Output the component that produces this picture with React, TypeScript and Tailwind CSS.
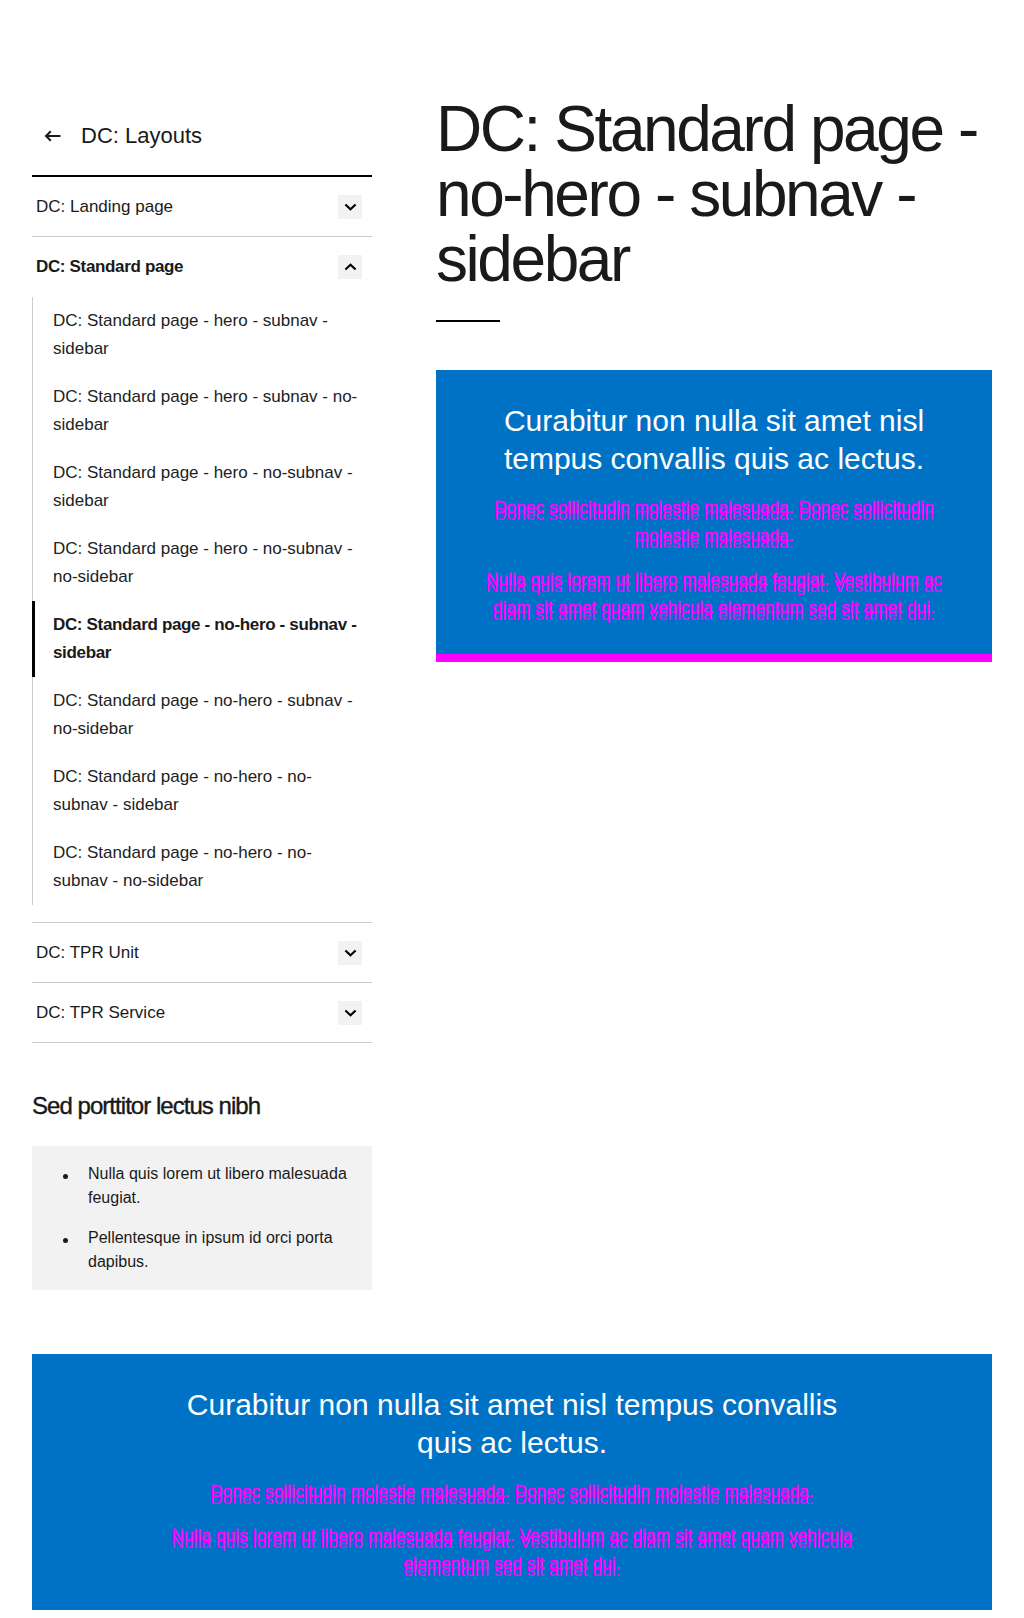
import type { ReactNode } from "react";

type NavGroup = {
  label: string;
  open?: boolean;
  children?: { label: string; active?: boolean }[];
};

const NAV: NavGroup[] = [
  { label: "DC: Landing page" },
  {
    label: "DC: Standard page",
    open: true,
    children: [
      { label: "DC: Standard page - hero - subnav - sidebar" },
      { label: "DC: Standard page - hero - subnav - no-sidebar" },
      { label: "DC: Standard page - hero - no-subnav - sidebar" },
      { label: "DC: Standard page - hero - no-subnav - no-sidebar" },
      { label: "DC: Standard page - no-hero - subnav - sidebar", active: true },
      { label: "DC: Standard page - no-hero - subnav - no-sidebar" },
      { label: "DC: Standard page - no-hero - no-subnav - sidebar" },
      { label: "DC: Standard page - no-hero - no-subnav - no-sidebar" },
    ],
  },
  { label: "DC: TPR Unit" },
  { label: "DC: TPR Service" },
];

function Chevron({ up }: { up?: boolean }) {
  return (
    <span className="flex h-6 w-6 shrink-0 items-center justify-center bg-[#f2f2f2]">
      <svg width="13" height="8" viewBox="0 0 14 8" fill="none" aria-hidden>
        <path
          d={up ? "M1.5 6.8 L7 1.5 L12.5 6.8" : "M1.5 1.2 L7 6.5 L12.5 1.2"}
          stroke="#000"
          strokeWidth="2.3"
        />
      </svg>
    </span>
  );
}

function BackArrow() {
  return (
    <svg width="17" height="12" viewBox="0 0 17 12" fill="none" aria-hidden>
      <path d="M16.5 6H2 M6.8 1.2 L2 6 L6.8 10.8" stroke="#1a1a1a" strokeWidth="2" />
    </svg>
  );
}

// Callout bleu : titre blanc + paragraphes magenta doublés (rendu cassé d'origine)
function Callout({
  paragraphs,
  wide,
  className = "",
}: {
  paragraphs: ReactNode[];
  wide?: boolean;
  className?: string;
}) {
  return (
    <section
      className={`bg-[#0072c6] pt-8 pb-7 text-center ${
        wide ? "px-8" : "border-b-8 border-[#ff00ff] px-10"
      } ${className}`}
    >
      <div className={wide ? "mx-auto max-w-[696px]" : ""}>
        <h3 className="mb-5 text-[30px] leading-[38px] text-white">
          Curabitur non nulla sit amet nisl tempus convallis quis ac lectus.
        </h3>
        <div className="space-y-4">
          {paragraphs.map((p, i) => (
            <p
              key={i}
              className="relative -top-1 text-[17px] leading-7 tracking-[0.01em] text-[#ff00ff] [-webkit-text-stroke:0.5px_#ff00ff] [text-shadow:0_7px_0_#ff00ff]"
            >
              {p}
            </p>
          ))}
        </div>
      </div>
    </section>
  );
}

const CALLOUT_TEXT = [
  "Donec sollicitudin molestie malesuada. Donec sollicitudin molestie malesuada.",
  "Nulla quis lorem ut libero malesuada feugiat. Vestibulum ac diam sit amet quam vehicula elementum sed sit amet dui.",
];

export default function App() {
  return (
    <div className="min-h-screen bg-white font-['Liberation_Sans',Arial,sans-serif] text-[#1a1a1a]">
      <div className="px-8 pt-24">
        <div className="flex items-start gap-16">
          <aside className="w-[340px] shrink-0">
            <div className="flex h-[81px] items-center gap-5 border-b-2 border-black pl-3">
              <BackArrow />
              <span className="text-[22px] leading-7">DC: Layouts</span>
            </div>

            <nav>
              {NAV.map((group) =>
                group.open ? (
                  <div key={group.label} className="border-b border-[#cccccc] pb-[17px]">
                    <div className="flex h-[60px] items-center justify-between pl-1 pr-[10px]">
                      <span className="text-[17px] font-bold tracking-[-0.02em]">
                        {group.label}
                      </span>
                      <Chevron up />
                    </div>
                    <ul>
                      {group.children!.map((child) => (
                        <li
                          key={child.label}
                          className={
                            child.active
                              ? "border-l-[3px] border-black py-[10px] pl-[18px] pr-3 text-[17px] leading-7 font-bold tracking-[-0.02em]"
                              : "border-l border-[#cccccc] py-[10px] pl-5 pr-3 text-[17px] leading-7 text-[#222222]"
                          }
                        >
                          {child.label}
                        </li>
                      ))}
                    </ul>
                  </div>
                ) : (
                  <div
                    key={group.label}
                    className="flex h-[60px] items-center justify-between border-b border-[#cccccc] pl-1 pr-[10px]"
                  >
                    <span className="text-[17px]">{group.label}</span>
                    <Chevron />
                  </div>
                )
              )}
            </nav>

            <h2 className="mt-[47px] mb-6 text-[24px] leading-8 tracking-[-0.04em] [-webkit-text-stroke:0.35px_#111]">
              Sed porttitor lectus nibh
            </h2>
            <ul className="space-y-4 bg-[#f2f2f2] py-4 pl-[31px] pr-4 text-[16px] leading-6">
              {["Nulla quis lorem ut libero malesuada feugiat.", "Pellentesque in ipsum id orci porta dapibus."].map(
                (t) => (
                  <li key={t} className="flex">
                    <span className="mt-3 mr-5 h-[5px] w-[5px] shrink-0 rounded-full bg-[#1a1a1a]" />
                    <span>{t}</span>
                  </li>
                )
              )}
            </ul>
          </aside>

          <main className="w-[556px]">
            <h1 className="mt-px text-[64px] leading-[65px] tracking-[-0.038em]">
              DC: Standard page - no-hero - subnav - sidebar
            </h1>
            <div className="mt-7 h-[2px] w-16 bg-black" />
            <Callout className="mt-12" paragraphs={CALLOUT_TEXT} />
          </main>
        </div>

        <Callout wide className="mt-16" paragraphs={CALLOUT_TEXT} />
      </div>
    </div>
  );
}
